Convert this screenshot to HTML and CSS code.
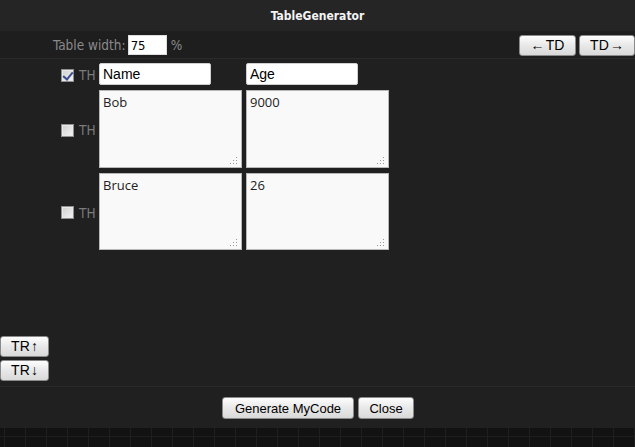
FILE: index.html
```html
<!DOCTYPE html>
<html>
<head>
<meta charset="utf-8">
<link rel="stylesheet" href="styles.css">
</head>
<body>
<div class="panel">
  <div class="header">TableGenerator</div>
  <div class="toolbar">
    <div class="width-ctl">
      <span class="label">Table width:</span>
      <input class="num" type="text" value="75">
      <span class="label pct">%</span>
    </div>
    <div class="td-btns">
      <button class="btn">←&#8202;TD</button>
      <button class="btn">TD&#8202;→</button>
    </div>
  </div>
  <div class="content">
    <div class="grid">
      <div class="th"><span class="cb checked"></span><span class="thl">TH</span></div>
      <div class="cell"><input class="txt" type="text" value="Name"></div>
      <div class="cell"><input class="txt" type="text" value="Age"></div>

      <div class="th"><span class="cb"></span><span class="thl">TH</span></div>
      <div class="cell"><textarea class="ta">Bob</textarea><svg class="grip" width="8" height="8" viewBox="0 0 8 8"><rect x="6" y="0" width="1" height="1"/><rect x="3" y="3" width="1" height="1"/><rect x="6" y="3" width="1" height="1"/><rect x="0" y="6" width="1" height="1"/><rect x="3" y="6" width="1" height="1"/><rect x="6" y="6" width="1" height="1"/></svg></div>
      <div class="cell"><textarea class="ta">9000</textarea><svg class="grip" width="8" height="8" viewBox="0 0 8 8"><rect x="6" y="0" width="1" height="1"/><rect x="3" y="3" width="1" height="1"/><rect x="6" y="3" width="1" height="1"/><rect x="0" y="6" width="1" height="1"/><rect x="3" y="6" width="1" height="1"/><rect x="6" y="6" width="1" height="1"/></svg></div>

      <div class="th"><span class="cb"></span><span class="thl">TH</span></div>
      <div class="cell"><textarea class="ta">Bruce</textarea><svg class="grip" width="8" height="8" viewBox="0 0 8 8"><rect x="6" y="0" width="1" height="1"/><rect x="3" y="3" width="1" height="1"/><rect x="6" y="3" width="1" height="1"/><rect x="0" y="6" width="1" height="1"/><rect x="3" y="6" width="1" height="1"/><rect x="6" y="6" width="1" height="1"/></svg></div>
      <div class="cell"><textarea class="ta">26</textarea><svg class="grip" width="8" height="8" viewBox="0 0 8 8"><rect x="6" y="0" width="1" height="1"/><rect x="3" y="3" width="1" height="1"/><rect x="6" y="3" width="1" height="1"/><rect x="0" y="6" width="1" height="1"/><rect x="3" y="6" width="1" height="1"/><rect x="6" y="6" width="1" height="1"/></svg></div>
    </div>
    <div class="tr-btns">
      <button class="btn tr">TR&#8202;↑</button>
      <button class="btn tr">TR&#8202;↓</button>
    </div>
  </div>
  <div class="footer">
    <button class="btn gen">Generate MyCode</button>
    <button class="btn close">Close</button>
  </div>
</div>
<div class="pattern"></div>
</body>
</html>
```
FILE: styles.css
```css
* { box-sizing: border-box; }
html, body { margin: 0; padding: 0; }
body {
  width: 635px;
  height: 447px;
  background: #121212;
  overflow: hidden;
  font-family: "Liberation Sans", Arial, sans-serif;
}
.panel {
  height: 428px;
  background: #202020;
  display: flex;
  flex-direction: column;
}
.header {
  height: 31px;
  background: #252525;
  color: #f4f4f4;
  font-family: "DejaVu Sans Condensed", "DejaVu Sans", sans-serif;
  font-weight: bold;
  font-size: 12px;
  display: flex;
  align-items: center;
  justify-content: center;
  padding-top: 1px;
}
.toolbar {
  height: 28px;
  background: #1e1e1e;
  border-bottom: 1px solid #2b2b2b;
  display: flex;
  align-items: flex-start;
  justify-content: space-between;
  padding-top: 4px;
}
.width-ctl {
  display: flex;
  align-items: center;
  padding-left: 53px;
  height: 20px;
}
.label {
  color: #8a8a8a;
  font-family: "DejaVu Sans Condensed", "DejaVu Sans", sans-serif;
  font-size: 13.5px;
}
.pct { margin-left: 4px; }
.num {
  width: 39px;
  height: 20px;
  margin: 0 0 0 2px;
  border: 1px solid #ddd;
  background: #fff;
  padding: 1px 2px;
  font-family: "DejaVu Sans Condensed", "DejaVu Sans", sans-serif;
  font-size: 13px;
  color: #000;
}
.td-btns { display: flex; gap: 3px; }
.btn {
  font-family: "Liberation Sans", Arial, sans-serif;
  font-size: 13px;
  color: #000;
  height: 21px;
  padding: 0 10px;
  border: 1px solid #8a8a8a;
  border-radius: 3px;
  background: linear-gradient(#fdfdfd, #e8e8e8 50%, #d9d9d9);
  margin: 0;
  line-height: 19px;
}
.td-btns .btn { width: 57px; padding: 0; font-size: 14px; }
.td-btns .btn:last-child { width: 56px; }
.content {
  flex: 1;
  display: flex;
  flex-direction: column;
  padding-top: 4px;
  padding-bottom: 5px;
}
.grid {
  display: grid;
  grid-template-columns: 99px 147px 147px;
  grid-template-rows: 22px 78px 77px;
  row-gap: 5px;
}
.th {
  display: flex;
  align-items: center;
  padding-left: 61px;
  padding-top: 2px;
}
.cb {
  width: 13px;
  height: 13px;
  border: 1px solid #8e8f8f;
  background: linear-gradient(135deg, #cfcfcf, #f4f4f4);
  box-shadow: inset 0 0 0 1px #e9e9e9;
  position: relative;
  flex: none;
}
.cb.checked::after {
  content: "";
  position: absolute;
  left: 3px;
  top: 0px;
  width: 4px;
  height: 8px;
  border-right: 2px solid #3b4f8f;
  border-bottom: 2px solid #3b4f8f;
  transform: rotate(40deg);
}
.thl {
  margin-left: 5px;
  color: #7b7b7b;
  font-family: "DejaVu Sans Condensed", "DejaVu Sans", sans-serif;
  font-size: 13.5px;
}
.cell { display: flex; position: relative; }
.txt {
  width: 112px;
  height: 22px;
  margin: 0;
  border: 1px solid #cfcfcf;
  border-radius: 2px;
  background: #fff;
  padding: 1px 3px;
  font-family: "Liberation Sans", Arial, sans-serif;
  font-size: 14px;
  color: #000;
}
.ta {
  width: 143px;
  height: 100%;
  margin: 0;
  border: 1px solid #b8b8b8;
  background: #f9f9f9;
  padding: 3px 3px;
  font-family: "Open Sans", "Noto Sans", sans-serif;
  font-size: 13px;
  line-height: 16px;
  color: #222;
  resize: none;
}
.grip {
  position: absolute;
  right: 8px;
  bottom: 3px;
  fill: #9a9a9a;
}
.tr-btns {
  margin-top: auto;
  display: flex;
  flex-direction: column;
  gap: 3px;
  align-items: flex-start;
}
.btn.tr { width: 49px; padding: 0; font-size: 14px; }
.footer {
  height: 42px;
  border-top: 1px solid #2a2a2a;
  display: flex;
  justify-content: center;
  align-items: flex-start;
  gap: 4px;
  padding-top: 10px;
  padding-left: 1px;
}
.footer .btn { height: 22px; font-size: 13px; }
.footer .gen { width: 132px; padding: 0; }
.footer .close { width: 56px; padding: 0; }
.pattern {
  height: 19px;
  background-color: #121212;
  background-image:
    linear-gradient(90deg, transparent 0 4px, #1f1f1f 4px 5px, transparent 5px),
    linear-gradient(transparent 0 8px, #1d1d1d 8px 9px, transparent 9px);
  background-size: 21px 19px, 21px 19px;
}
```
